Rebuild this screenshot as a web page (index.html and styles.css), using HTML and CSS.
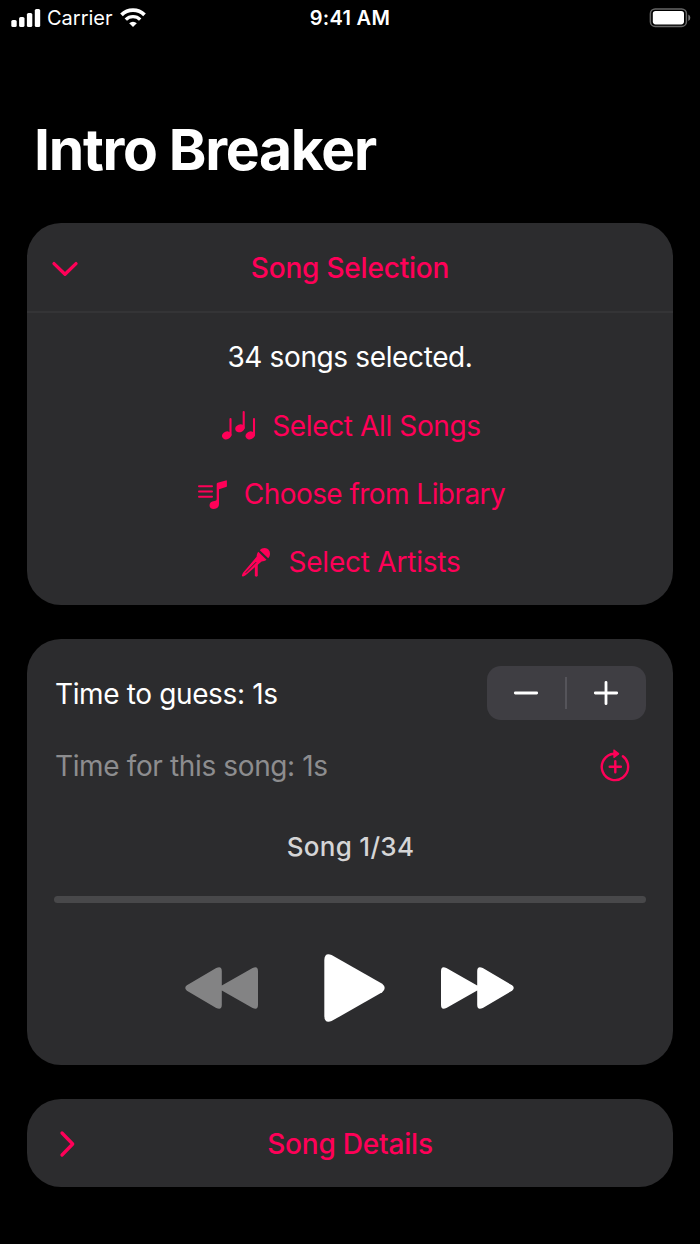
FILE: index.html
```html
<!DOCTYPE html>
<html lang="en">
<head>
  <meta charset="UTF-8">
  <title>Intro Breaker</title>
  <meta name="viewport" content="width=device-width, initial-scale=1.0">
  <link rel="stylesheet" href="styles.css">
</head>
<body>
  <div class="status-bar">
    <div class="status-left">
      <svg class="signal" width="30" height="18" viewBox="0 0 30 18" fill="#fff">
        <rect x="0.3" y="11" width="5.4" height="7" rx="1.6"/>
        <rect x="8.1" y="8" width="5.4" height="10" rx="1.6"/>
        <rect x="15.9" y="4" width="5.4" height="14" rx="1.6"/>
        <rect x="23.8" y="0" width="5.4" height="18" rx="1.6"/>
      </svg>
      <span class="carrier">Carrier</span>
      <svg class="wifi" width="26" height="20" viewBox="0 0 26 20">
        <path d="M1.5 6.8 A16.5 16.5 0 0 1 24.5 6.8" fill="none" stroke="#fff" stroke-width="3.8"/>
        <path d="M5.8 11.6 A10.3 10.3 0 0 1 20.2 11.6" fill="none" stroke="#fff" stroke-width="3.4"/>
        <path d="M9.2 15.2 A5.4 5.4 0 0 1 16.8 15.2 L13 19 Z" fill="#fff"/>
      </svg>
    </div>
    <span class="clock">9:41 AM</span>
    <div class="status-right">
      <svg width="42" height="20" viewBox="0 0 42 20">
        <rect x="1.4" y="0.9" width="36" height="17.6" rx="4.8" fill="none" stroke="#666" stroke-width="1.5"/>
        <rect x="3.8" y="3" width="31.2" height="13.4" rx="2.8" fill="#fff"/>
        <path d="M39.3 6.5 Q41.3 7.5 41.3 9.8 Q41.3 12 39.3 13 Z" fill="#777"/>
      </svg>
    </div>
  </div>

  <h1>Intro Breaker</h1>

  <main>
    <section class="card">
      <div class="card-header">
        <svg class="chevron" width="30" height="20" viewBox="0 0 30 20">
          <path d="M4 4.6 L15 15.3 L26 4.6"/>
        </svg>
        <h2>Song Selection</h2>
      </div>
      <div class="selection">
        <p class="row count">34 songs selected.</p>
        <a class="row">
          <svg width="36" height="32" viewBox="0 0 36 32">
            <g fill="currentColor">
              <ellipse cx="5.7" cy="25.4" rx="4.8" ry="3.9" transform="rotate(-20 5.7 25.4)"/>
              <ellipse cx="18.9" cy="18.3" rx="4.8" ry="3.9" transform="rotate(-20 18.9 18.3)"/>
              <ellipse cx="29.2" cy="25.4" rx="4.8" ry="3.9" transform="rotate(-20 29.2 25.4)"/>
            </g>
            <path d="M9.5 9 V25 M22.7 2 V18 M33 9 V25" fill="none" stroke="currentColor" stroke-width="2.1" stroke-linecap="round"/>
          </svg>
          <span>Select All Songs</span>
        </a>
        <a class="row">
          <svg width="32" height="32" viewBox="0 0 32 32">
            <path d="M2 8.2 H15 M2 13.5 H15 M2 18.7 H15" fill="none" stroke="currentColor" stroke-width="2" stroke-linecap="round"/>
            <path d="M19.7 5.9 Q19.7 5 20.6 4.8 L28.8 2.4 Q29.9 2.1 29.9 3.2 V8 Q29.9 8.8 29 9.1 L22 11.2 V26 Q22 30.6 16.8 30.9 Q12.5 30.9 12.5 27.3 Q12.6 23.6 17.4 23 Q19.7 22.7 19.7 21.5 Z" fill="currentColor"/>
          </svg>
          <span class="library">Choose from Library</span>
        </a>
        <a class="row">
          <svg width="32" height="32" viewBox="0 0 32 32">
            <path d="M18.8 4.2 C21.6 0.9 26.8 1.5 28.5 5.2 C29.5 7.7 29 10.6 27.2 12.3 Z" fill="currentColor"/>
            <path d="M17.3 5.8 L25.5 13.8 C24 15 22.5 15.2 20.6 15.6 L4.6 29.2 L2.2 30.4 Q0.8 30.6 0.9 29.2 L2 26.8 L15.6 10.8 C15.8 8.6 16.2 7.2 17.3 5.8 Z" fill="currentColor"/>
            <path d="M15.3 18 V29.2" fill="none" stroke="currentColor" stroke-width="2.9" stroke-linecap="round"/>
            <path d="M5 26.5 L14.9 16.4" stroke="#2c2c2e" stroke-width="1" stroke-linecap="round"/>
          </svg>
          <span class="artists">Select Artists</span>
        </a>
      </div>
    </section>

    <section class="card player">
      <div class="setting">
        <span>Time to guess: 1s</span>
        <div class="stepper">
          <button type="button" aria-label="Less">
            <svg width="26" height="26" viewBox="0 0 26 26"><path d="M2.3 13 H23.7"/></svg>
          </button>
          <button type="button" aria-label="More">
            <svg width="26" height="26" viewBox="0 0 26 26"><path d="M2.3 13 H23.7 M13 2.3 V23.7"/></svg>
          </button>
        </div>
      </div>
      <div class="setting extra">
        <span>Time for this song: 1s</span>
        <svg class="add-time" width="32" height="34" viewBox="0 0 32 34">
          <path d="M22.9 7.3 A13.2 13.2 0 1 1 14 4.7 M9.7 17.7 H20.9 M15.3 12.1 V23.3" fill="none" stroke="currentColor" stroke-width="2.4" stroke-linecap="round"/>
          <path d="M13.3 1.1 Q13.3 0 14.3 0.6 L18.9 4 Q19.7 4.7 18.9 5.4 L14.3 8.9 Q13.3 9.4 13.3 8.3 Z" fill="currentColor"/>
        </svg>
      </div>
      <p class="song-number">Song 1/34</p>
      <div class="progress"></div>
      <div class="controls">
        <svg class="rewind" width="73" height="42" viewBox="0 0 73 42">
          <path d="M1.9 18.3 L31.2 1.1 Q36.8 -1.4 36.8 4.2 V18.5 L67.6 1.1 Q73 -1.4 73 4.2 V37.8 Q73 43.4 67.6 40.9 L36.8 23.5 V37.8 Q36.8 43.4 31.2 40.9 L1.9 23.7 Q-1.4 21 1.9 18.3 Z"/>
        </svg>
        <svg width="61" height="68" viewBox="0 0 61 68">
          <path d="M0.3 6 Q0.5 -1.8 7.6 0.9 L58.2 29.8 Q63.2 34 58.2 38.2 L7.6 67.1 Q0.5 69.8 0.3 62 Z"/>
        </svg>
        <svg width="73" height="42" viewBox="0 0 73 42">
          <path d="M71.1 18.3 L41.8 1.1 Q36.2 -1.4 36.2 4.2 V18.5 L5.4 1.1 Q0 -1.4 0 4.2 V37.8 Q0 43.4 5.4 40.9 L36.2 23.5 V37.8 Q36.2 43.4 41.8 40.9 L71.1 23.7 Q74.4 21 71.1 18.3 Z"/>
        </svg>
      </div>
    </section>

    <section class="card">
      <div class="card-header">
        <svg class="chevron closed" width="20" height="30" viewBox="0 0 20 30">
          <path d="M5 4 L15.7 15 L5 26"/>
        </svg>
        <h2>Song Details</h2>
      </div>
    </section>
  </main>
</body>
</html>
```
FILE: styles.css
```css
* {
  box-sizing: border-box;
}
body {
  margin: 0;
  background: #000;
  color: #fff;
  font-family: Inter, "Liberation Sans", sans-serif;
  font-size: 28px;
  letter-spacing: -0.37px;
}
h1, h2, p {
  margin: 0;
}
svg {
  display: block;
  flex: none;
}
.status-bar {
  display: grid;
  grid-template-columns: 1fr auto 1fr;
  align-items: center;
  height: 36px;
  padding: 0 9px 0 11px;
  font-size: 20px;
  line-height: 36px;
  letter-spacing: 0;
}
.status-left {
  display: flex;
  align-items: center;
}
.carrier {
  margin: 0 7px 0 6px;
}
.clock {
  margin-right: 2px;
  font-weight: 600;
  letter-spacing: 0.3px;
}
.status-right {
  display: flex;
  justify-content: flex-end;
}
h1 {
  padding: 0 34px;
  margin-top: 79px;
  height: 70px;
  font-size: 57px;
  line-height: 70px;
  font-weight: 700;
  letter-spacing: -1.3px;
}
main {
  display: flex;
  flex-direction: column;
  gap: 34px;
  margin: 38px 27px 0;
}
.card {
  background: #2c2c2e;
  border-radius: 34px;
}
.card-header {
  display: grid;
  grid-template-columns: 76px 1fr 76px;
  align-items: center;
  height: 88px;
}
.card-header h2 {
  padding-top: 1px;
  font-size: 28px;
  font-weight: 500;
  letter-spacing: -0.2px;
  text-align: center;
  color: #ff0058;
}
.chevron {
  justify-self: center;
  margin-top: 3px;
  fill: none;
  stroke: #ff0058;
  stroke-width: 3.3;
  stroke-linecap: round;
  stroke-linejoin: round;
}
.closed {
  margin: 1px 0 0 4px;
}
.selection {
  border-top: 2px solid #343436;
  padding: 10px 0;
}
.row {
  display: flex;
  align-items: center;
  justify-content: center;
  gap: 15px;
  height: 68px;
  padding: 1px 0 0 2px;
  color: #ff0058;
}
.row.count {
  padding: 0;
  color: #fff;
}
.library {
  letter-spacing: -0.55px;
}
.artists {
  letter-spacing: -0.22px;
}
.player {
  height: 426px;
  padding: 27px 27px 0 28px;
}
.setting {
  display: flex;
  align-items: center;
  justify-content: space-between;
  height: 54px;
}
.setting span {
  padding-top: 2px;
}
.stepper {
  display: flex;
  width: 159px;
  height: 54px;
  padding: 11px 0;
  background: #3f3e43;
  border-radius: 14px;
}
.stepper button {
  flex: 1;
  display: flex;
  align-items: center;
  justify-content: center;
  padding: 0;
  border: 0;
  background: none;
}
.stepper button:first-child {
  flex: 0 0 78px;
}
.stepper button + button {
  padding-right: 2px;
  border-left: 2px solid #55545a;
}
.stepper path {
  stroke: #fff;
  stroke-width: 2.8;
  stroke-linecap: round;
}
.extra {
  margin-top: 18px;
  color: #8d8d8f;
}
.add-time {
  margin: 2px 14px 0 0;
  color: #ff0058;
}
.song-number {
  margin-top: 38px;
  height: 34px;
  font-size: 26px;
  line-height: 34px;
  font-weight: 500;
  letter-spacing: 0.3px;
  text-align: center;
  color: #d5d5d6;
}
.progress {
  height: 7px;
  margin: 32px 0 0 -1px;
  border-radius: 4px;
  background: #48484a;
}
.controls {
  display: flex;
  align-items: center;
  justify-content: center;
  margin: 51px 2px 0 0;
  fill: #fff;
}
.controls svg + svg {
  margin-left: 66px;
}
.controls svg + svg + svg {
  margin-left: 56px;
}
.rewind {
  fill: #838384;
}
```
